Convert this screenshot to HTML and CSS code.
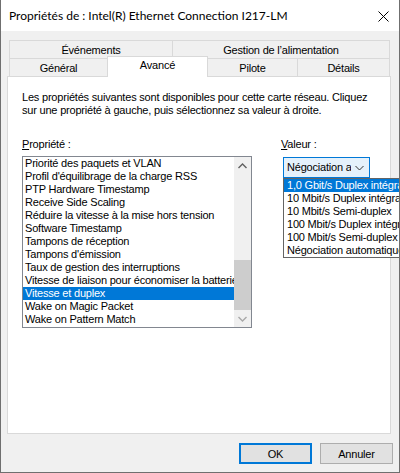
FILE: index.html
```html
<!DOCTYPE html>
<html lang="fr">
<head>
<meta charset="utf-8">
<title>Propriétés</title>
<link rel="stylesheet" href="styles.css">
</head>
<body>
<div class="window">
  <div class="titlebar">
    <span class="title">Propriétés de : Intel(R) Ethernet Connection I217-LM</span>
    <svg class="close" width="11" height="11" viewBox="0 0 11 11"><path d="M0.5 0.5 L10.5 10.5 M10.5 0.5 L0.5 10.5" stroke="#000" stroke-width="1" fill="none"/></svg>
  </div>
  <div class="body">
    <div class="tabs">
      <div class="tabrow">
        <div class="tab w-evt">Événements</div>
        <div class="tab w-gest">Gestion de l’alimentation</div>
      </div>
      <div class="tabrow">
        <div class="tab w-gen">Général</div>
        <div class="tab w-av active">Avancé</div>
        <div class="tab w-pil">Pilote</div>
        <div class="tab w-det">Détails</div>
      </div>
    </div>
    <div class="panel">
      <p class="desc">Les propriétés suivantes sont disponibles pour cette carte réseau. Cliquez sur une propriété à gauche, puis sélectionnez sa valeur à droite.</p>
      <div class="fields">
        <div class="col-left">
          <div class="label"><u>P</u>ropriété :</div>
          <div class="listbox">
            <ul class="items">
              <li>Priorité des paquets et VLAN</li>
              <li>Profil d'équilibrage de la charge RSS</li>
              <li>PTP Hardware Timestamp</li>
              <li>Receive Side Scaling</li>
              <li>Réduire la vitesse à la mise hors tension</li>
              <li>Software Timestamp</li>
              <li>Tampons de réception</li>
              <li>Tampons d'émission</li>
              <li>Taux de gestion des interruptions</li>
              <li>Vitesse de liaison pour économiser la batterie</li>
              <li class="sel">Vitesse et duplex</li>
              <li>Wake on Magic Packet</li>
              <li>Wake on Pattern Match</li>
            </ul>
            <div class="scrollbar">
              <div class="sb-btn"><svg width="9" height="6" viewBox="0 0 9 6"><path d="M0.5 5 L4.5 1 L8.5 5" stroke="#606060" stroke-width="1.4" fill="none"/></svg></div>
              <div class="sb-track"><div class="sb-thumb"></div></div>
              <div class="sb-btn"><svg width="9" height="6" viewBox="0 0 9 6"><path d="M0.5 1 L4.5 5 L8.5 1" stroke="#a8a8a8" stroke-width="1.4" fill="none"/></svg></div>
            </div>
          </div>
        </div>
        <div class="col-right">
          <div class="label"><u>V</u>aleur :</div>
          <div class="combo-wrap">
            <div class="combo">
              <span class="combo-text">Négociation automatique</span>
              <svg class="chev" width="9" height="6" viewBox="0 0 9 6"><path d="M0.5 1 L4.5 5 L8.5 1" stroke="#333" stroke-width="1" fill="none"/></svg>
            </div>
            <ul class="dropdown">
              <li class="sel">1,0 Gbit/s Duplex intégral</li>
              <li>10 Mbit/s Duplex intégral</li>
              <li>10 Mbit/s Semi-duplex</li>
              <li>100 Mbit/s Duplex intégral</li>
              <li>100 Mbit/s Semi-duplex</li>
              <li>Négociation automatique</li>
            </ul>
          </div>
        </div>
      </div>
    </div>
    <div class="buttons">
      <button class="btn default">OK</button>
      <button class="btn">Annuler</button>
    </div>
  </div>
</div>
</body>
</html>
```

FILE: styles.css
```css
* { box-sizing: border-box; }
html, body { margin: 0; padding: 0; }
body {
  width: 400px;
  height: 473px;
  overflow: hidden;
  font-family: "Liberation Sans", Arial, sans-serif;
  font-size: 11px;
  letter-spacing: -0.2px;
  color: #000;
  background: #f0f0f0;
}
.window {
  width: 400px;
  height: 473px;
  border-left: 1px solid #6f6f6f;
  border-right: 1px solid #6f6f6f;
  border-bottom: 1px solid #6f6f6f;
  background: #f0f0f0;
  overflow: hidden;
  display: flex;
  flex-direction: column;
}
.titlebar {
  height: 31px;
  background: #fff;
  display: flex;
  align-items: center;
  justify-content: space-between;
  padding: 0 10px 0 8px;
  flex: none;
}
.title {
  font-family: Lato, "Noto Sans", sans-serif;
  font-size: 12px;
  letter-spacing: 0;
  color: #000;
}
.close { display: block; margin-top: 1px; }
.body {
  flex: 1;
  padding: 9px 0 0 6px;
  display: flex;
  flex-direction: column;
}
.tabs { margin-left: 2px; }
.tabrow { display: flex; height: 18px; }
.tab {
  height: 18px;
  border: 1px solid #d9d9d9;
  border-bottom: none;
  margin-left: -1px;
  display: flex;
  align-items: center;
  justify-content: center;
  background: #f0f0f0;
  line-height: 13px;
  padding-top: 1px;
}
.tabrow .tab:first-child { margin-left: 0; }
.w-evt { width: 164px; }
.w-gest { width: 218px; }
.w-gen { width: 99px; }
.w-av { width: 101px; }
.w-pil { width: 91px; }
.w-det { width: 93px; }
.tab.active {
  background: #fff;
  height: 21px;
  margin-top: -2px;
  margin-bottom: -1px;
  position: relative;
  z-index: 1;
  padding-top: 0;
  padding-bottom: 3px;
}
.panel {
  width: 384px;
  height: 358px;
  background: #fff;
  border: 1px solid #d9d9d9;
  padding: 14px 10px 0 14px;
  flex: none;
}
.desc {
  margin: 0;
  line-height: 13px;
}
.fields {
  display: grid;
  grid-template-columns: 230px auto;
  column-gap: 29px;
  margin-top: 21px;
}
.label {
  line-height: 13px;
  height: 13px;
}
.label u { text-decoration: underline; }
.listbox {
  margin-top: 5px;
  width: 230px;
  height: 172px;
  border: 1px solid #828790;
  display: flex;
}
.items {
  list-style: none;
  margin: 0;
  padding: 0;
  flex: 1;
  overflow: hidden;
}
.items li {
  height: 13px;
  line-height: 13px;
  padding-left: 2px;
  white-space: nowrap;
  overflow: hidden;
}
.items li.sel { background: #0078d7; color: #fff; }
.scrollbar {
  width: 17px;
  background: #f0f0f0;
  display: flex;
  flex-direction: column;
  flex: none;
}
.sb-btn {
  height: 17px;
  display: flex;
  align-items: center;
  justify-content: center;
  flex: none;
}
.sb-btn svg { display: block; }
.sb-track {
  flex: 1;
  display: flex;
  flex-direction: column;
  justify-content: flex-end;
  align-items: center;
}
.sb-thumb {
  width: 17px;
  height: 50px;
  background: #cdcdcd;
}
.col-right { position: relative; }
.combo-wrap {
  position: relative;
  margin-top: 6px;
  margin-left: 2px;
}
.combo {
  width: 87px;
  height: 21px;
  border: 1px solid #0078d7;
  background: #e5f1fb;
  display: flex;
  align-items: center;
  padding-left: 3px;
  padding-right: 5px;
}
.combo-text {
  flex: 1;
  overflow: hidden;
  white-space: nowrap;
  width: 65px;
  line-height: 13px;
}
.chev { display: block; margin-left: 4px; flex: none; }
.dropdown {
  position: absolute;
  left: 0;
  top: 21px;
  width: 140px;
  margin: 0;
  padding: 0;
  list-style: none;
  background: #fff;
  border: 1px solid #646464;
  z-index: 5;
}
.dropdown li {
  height: 13px;
  line-height: 13px;
  padding-left: 3px;
  white-space: nowrap;
}
.dropdown li.sel { background: #0078d7; color: #fff; }
.buttons {
  display: flex;
  justify-content: flex-end;
  gap: 8px;
  margin-top: 9px;
  padding-right: 6px;
}
.btn {
  width: 73px;
  height: 21px;
  font-family: "Liberation Sans", Arial, sans-serif;
  font-size: 11px;
  letter-spacing: -0.2px;
  color: #000;
  background: #e1e1e1;
  border: 1px solid #adadad;
  padding: 0;
  margin: 0;
}
.btn.default { border: 2px solid #0078d7; }
```
